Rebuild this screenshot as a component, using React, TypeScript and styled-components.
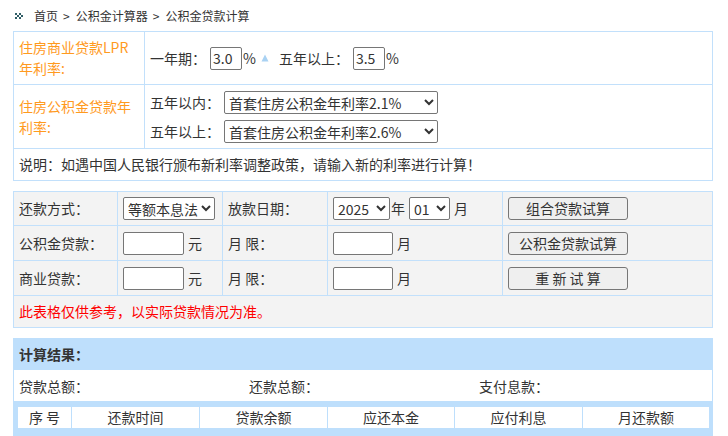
import React from 'react';
import styled, { createGlobalStyle } from 'styled-components';

const Global = createGlobalStyle`
  body {
    margin: 0;
    background: #fff;
    font-family: "Noto Sans CJK SC", "Noto Sans", sans-serif;
    font-size: 14px;
    color: #333;
  }
`;

const line = '#c2e0fb';

const Page = styled.div`
  width: 700px;
  padding-left: 13px;
`;

const Crumbs = styled.div`
  height: 31px;
  display: flex;
  align-items: center;
  font-size: 12px;
  color: #333;
  svg {
    margin: 0 11px 0 2px;
  }
`;

const Sep = styled.span`
  margin: 0 6px 0 5px;
`;

const RateGrid = styled.div`
  display: grid;
  grid-template-columns: 131px 1fr;
  grid-template-rows: 53px 64px 32px;
  border-top: 1px solid ${line};
  border-left: 1px solid ${line};
`;

const LoanGrid = styled.div`
  margin-top: 10px;
  display: grid;
  grid-template-columns: 104px 105px 105px 175px 210px;
  grid-template-rows: 34px 35px 35px 32px;
  background: #f3f3f3;
  border-top: 1px solid ${line};
  border-left: 1px solid ${line};
`;

const Cell = styled.div<{ $span?: number; $tone?: 'label' | 'warn' }>`
  box-sizing: border-box;
  border-right: 1px solid ${line};
  border-bottom: 1px solid ${line};
  padding: 0 5px;
  display: flex;
  align-items: center;
  line-height: 21px;
  grid-column: ${({ $span }) => ($span ? `span ${$span}` : 'auto')};
  color: ${({ $tone }) =>
    $tone === 'label' ? '#ff9a1e' : $tone === 'warn' ? '#ff0000' : '#333'};
`;

const Stack = styled.div`
  display: flex;
  flex-direction: column;
  gap: 6px;
`;

const Line = styled.div`
  display: flex;
  align-items: center;
`;

const Field = styled.input<{ $w: number; $flush?: boolean }>`
  box-sizing: border-box;
  width: ${({ $w }) => $w}px;
  height: 23px;
  margin: 0 4px 0 ${({ $flush }) => ($flush ? 0 : 4)}px;
  padding: 1px 2px;
  border: 1px solid #767676;
  border-radius: 2px;
  font-family: inherit;
  font-size: 14px;
  color: #333;
`;

const Pick = styled.select<{ $w: number; $flush?: boolean }>`
  box-sizing: border-box;
  width: ${({ $w }) => $w}px;
  height: 23px;
  margin: 0 4px 0 ${({ $flush }) => ($flush ? 0 : 4)}px;
  border: 1px solid #767676;
  border-radius: 2px;
  background: #fff;
  font-family: inherit;
  font-size: 14px;
  color: #333;
`;

const Tight = styled.span`
  margin-left: -3px;
`;

const Arrow = styled.svg`
  margin: 0 10px 0 5px;
`;

const Button = styled.button`
  width: 120px;
  height: 23px;
  padding: 0;
  border: 1px solid #767676;
  border-radius: 3px;
  background: #efefef;
  font-family: inherit;
  font-size: 14px;
  color: #333;
  line-height: 19px;
`;

const Result = styled.div`
  margin-top: 10px;
  background: #bedffc;
  padding-bottom: 8px;
`;

const ResultHead = styled.div`
  height: 32px;
  display: flex;
  align-items: center;
  padding-left: 6px;
  font-weight: bold;
`;

const Totals = styled.div`
  margin: 0 1px;
  height: 31px;
  background: #fff;
  display: grid;
  grid-template-columns: 230px 230px 1fr;
  align-items: center;
  padding-left: 5px;
`;

const Schedule = styled.div`
  margin-top: 6px;
  padding: 0 4px 0 5px;
  display: grid;
  grid-template-columns: 53px 127px 127px 126px 127px 1fr;
  gap: 1px;
`;

const HeadCell = styled.div`
  background: #fff;
  height: 21px;
  line-height: 21px;
  text-align: center;
`;

export default function App() {
  return (
    <Page>
      <Global />
      <Crumbs>
        <svg width="8" height="6" viewBox="0 0 8 6">
          <g fill="#2f5d66">
            <rect x="0" y="0" width="2" height="2" />
            <rect x="2" y="2" width="2" height="2" />
            <rect x="0" y="4" width="2" height="2" />
            <rect x="4" y="0" width="2" height="2" />
            <rect x="6" y="2" width="2" height="2" />
            <rect x="4" y="4" width="2" height="2" />
          </g>
        </svg>
        首页<Sep>&gt;</Sep>公积金计算器<Sep>&gt;</Sep>公积金贷款计算
      </Crumbs>

      <RateGrid>
        <Cell $tone="label">住房商业贷款LPR<br />年利率:</Cell>
        <Cell>
          一年期：<Field $w={32} defaultValue="3.0" />
          <Tight>%</Tight>
          <Arrow width="8" height="8" viewBox="0 0 8 8">
            <path d="M4 0.5 L7.5 7.5 L0.5 7.5 Z" fill="#a9d2f3" />
          </Arrow>
          五年以上：<Field $w={32} defaultValue="3.5" />
          <Tight>%</Tight>
        </Cell>
        <Cell $tone="label">住房公积金贷款年<br />利率:</Cell>
        <Cell>
          <Stack>
            <Line>
              五年以内：
              <Pick $w={214} defaultValue="2.1">
                <option value="2.1">首套住房公积金年利率2.1%</option>
              </Pick>
            </Line>
            <Line>
              五年以上：
              <Pick $w={214} defaultValue="2.6">
                <option value="2.6">首套住房公积金年利率2.6%</option>
              </Pick>
            </Line>
          </Stack>
        </Cell>
        <Cell $span={2}>说明：如遇中国人民银行颁布新利率调整政策，请输入新的利率进行计算！</Cell>
      </RateGrid>

      <LoanGrid>
        <Cell>还款方式：</Cell>
        <Cell>
          <Pick $w={95} $flush>
            <option>等额本息法</option>
            <option>等额本金法</option>
          </Pick>
        </Cell>
        <Cell>放款日期：</Cell>
        <Cell>
          <Pick $w={57} $flush>
            <option>2025</option>
          </Pick>
          <Tight>年</Tight>
          <Pick $w={41}>
            <option>01</option>
          </Pick>
          月
        </Cell>
        <Cell>
          <Button>组合贷款试算</Button>
        </Cell>

        <Cell>公积金贷款：</Cell>
        <Cell>
          <Field $w={61} $flush />元
        </Cell>
        <Cell>月 限：</Cell>
        <Cell>
          <Field $w={60} $flush />月
        </Cell>
        <Cell>
          <Button>公积金贷款试算</Button>
        </Cell>

        <Cell>商业贷款：</Cell>
        <Cell>
          <Field $w={61} $flush />元
        </Cell>
        <Cell>月 限：</Cell>
        <Cell>
          <Field $w={60} $flush />月
        </Cell>
        <Cell>
          <Button>重 新 试 算</Button>
        </Cell>

        <Cell $span={5} $tone="warn">此表格仅供参考，以实际贷款情况为准。</Cell>
      </LoanGrid>

      <Result>
        <ResultHead>计算结果：</ResultHead>
        <Totals>
          <span>贷款总额：</span>
          <span>还款总额：</span>
          <span>支付息款：</span>
        </Totals>
        <Schedule>
          {['序 号', '还款时间', '贷款余额', '应还本金', '应付利息', '月还款额'].map((t) => (
            <HeadCell key={t}>{t}</HeadCell>
          ))}
        </Schedule>
      </Result>
    </Page>
  );
}
